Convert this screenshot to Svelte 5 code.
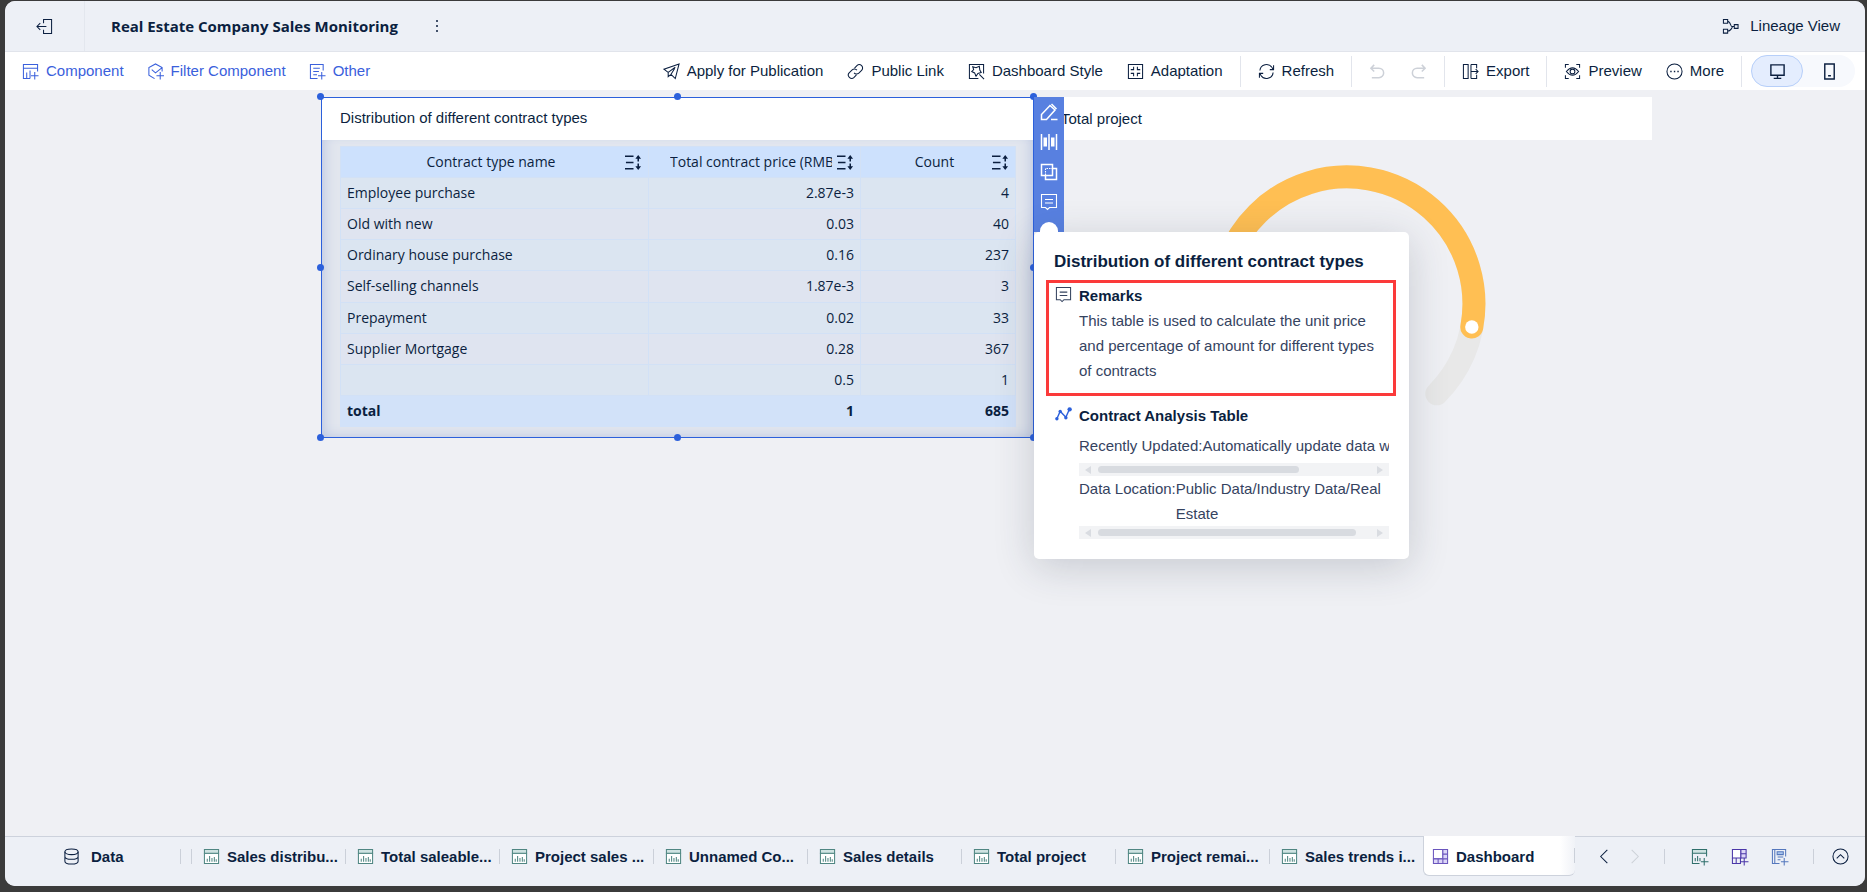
<script lang="ts">
  interface Row {
    name: string;
    price: string;
    count: string;
  }

  const columns = ["Contract type name", "Total contract price (RMB)", "Count"];

  const rows: Row[] = [
    { name: "Employee purchase", price: "2.87e-3", count: "4" },
    { name: "Old with new", price: "0.03", count: "40" },
    { name: "Ordinary house purchase", price: "0.16", count: "237" },
    { name: "Self-selling channels", price: "1.87e-3", count: "3" },
    { name: "Prepayment", price: "0.02", count: "33" },
    { name: "Supplier Mortgage", price: "0.28", count: "367" },
    { name: "", price: "0.5", count: "1" },
  ];

  const tabs = [
    "Sales distribu...",
    "Total saleable...",
    "Project sales ...",
    "Unnamed Co...",
    "Sales details",
    "Total project",
    "Project remai...",
    "Sales trends i...",
  ];

  const handles = ["nw", "n", "ne", "w", "e", "sw", "s", "se"];

  let device = $state("desktop");
</script>

{#snippet icon(name: string)}
  <svg class="icon" viewBox="0 0 18 18" aria-hidden="true">
    {#if name === "exit"}
      <path d="M8 5.500V1.500h8.500v15H8v-4M1 9h10M4.500 5.500L1 9l3.500 3.500" />
    {:else if name === "lineage"}
      <path d="M1.500 1.500h4.500v4H1.500zM1.500 12h4.500v4H1.500zM13 7h4v4h-4zM6 3.500c3 0 3 5.500 4.500 5.500S9 14 6 14M10 9h3" />
    {:else if name === "component"}
      <path d="M8.500 16.500h-7v-15h15V9M1.500 5.500h15M5 10v6.500M8.500 8v8.500M13.500 9.500v8M9.500 13.500h8" />
    {:else if name === "filter"}
      <path d="M16 9V4.800L9 1 2 4.800v8L8 16.500M5 7l4 3.500 7-5.700M14 9.500v8M10 13.500h8" />
    {:else if name === "other"}
      <path d="M9 16.500H1.500v-15h13.500V8M4.500 5.500h7M4.500 9h6M4.500 12.500h4M13.500 9.500v8M9.500 13.500h8" />
    {:else if name === "plane"}
      <path d="M17 1L1 6.500l4.500 3.500v4.500L8.500 12l4.500 4.500zM5.500 10L13 4.500M8.500 12l4-6.500" />
    {:else if name === "link"}
      <path d="M8 5.500l2.500-2.700a3.500 3.500 0 0 1 5 5l-3 3a3.500 3.500 0 0 1-5-.3M10 12.500l-2.500 2.700a3.500 3.500 0 0 1-5-5l3-3a3.500 3.500 0 0 1 5 .3" />
    {:else if name === "style"}
      <path d="M11 16.500H1.500v-15h15V11M5 4l3.500 1L12 3.500l.5 4L14 10l-3.500 1-2 3-1.500-3.500L4 9l2-2zM12 12l5 5" />
    {:else if name === "adapt"}
      <path d="M1.500 1.500h15v15h-15zM4 7h3V4M14 7h-3V4M4 11h3v3M14 11h-3v3" />
    {:else if name === "refresh"}
      <path d="M2 8a7 7 0 0 1 13-3l1 2M16.500 2.500v4.500h-4M16 10a7 7 0 0 1-13 3l-1-2M1.500 15.500v-4.500h4" />
    {:else if name === "undo"}
      <path d="M5.500 2L2 5.500 5.500 9M2 5.500h8.500a5 5 0 0 1 0 10H3" stroke-width="1.600" />
    {:else if name === "redo"}
      <path d="M12.500 2L16 5.500 12.500 9M16 5.500H7.500a5 5 0 0 0 0 10H15" stroke-width="1.600" />
    {:else if name === "export"}
      <path d="M6.500 1.500h-5v15h5zM9.500 1.500h6v4M9.500 16.500h6v-4M9.500 1.500v15M9.500 9h7.500M14.500 6.500L17 9l-2.500 2.500" />
    {:else if name === "preview"}
      <path d="M1.500 5V1.500H5M13 1.500h3.500V5M1.500 13v3.500H5M13 16.500h3.500V13M2.500 9Q9 1 15.500 9 9 17 2.500 9z" />
      <circle cx="9" cy="9" r="2.500" />
    {:else if name === "more"}
      <circle cx="9" cy="9" r="8" />
      <path class="solid" d="M4.500 8.300h1.500v1.500H4.500zM8.300 8.300h1.500v1.500H8.300zM12 8.300h1.500v1.500H12z" />
    {:else if name === "desktop"}
      <path d="M2 2h14v11H2zM9 13v3M5 16.300h8" stroke-width="1.500" />
    {:else if name === "phone"}
      <path d="M4 1h10v16H4zM7.500 13.500h3" stroke-width="1.500" />
    {:else if name === "sort"}
      <path d="M0 2.500h9M1 9h8M0 15.500h9M14 3v5M14 10v5" stroke-width="1.600" />
      <path class="solid" d="M11 5L14 1l3 4zM11 13l3 4 3-4z" />
    {:else if name === "edit"}
      <path d="M1.500 16.500v-5l8.500-9 5 4.500-8.500 9.500zM11.500 1l5 5M11 16.500h6.500" stroke-width="1.500" />
    {:else if name === "columns"}
      <path d="M1.500 1v16M9 1v16M16.500 1v16" stroke-width="1.500" />
      <path class="solid" d="M3.500 4.500h3.500v9H3.500zM11 4.500h3.500v9H11z" />
    {:else if name === "copy"}
      <path d="M1.500 1.500h11v11h-11zM12.500 5.500h4v11h-11v-4" stroke-width="1.500" />
      <path d="M5.500 12v-6.500H12" stroke-dasharray="1.500 1" />
    {:else if name === "remark"}
      <path d="M1.500 1.500h15v13H9.500l-2 2-2-2h-4zM5 6.500h8M5 10h8" />
    {:else if name === "trend"}
      <path d="M2 13.500L5.500 5.500l6 6.500 4-9" stroke-width="1.500" />
      <circle class="solid" cx="2" cy="13.500" r="1.800" />
      <circle class="solid" cx="5.500" cy="5.800" r="1.800" />
      <circle class="solid" cx="11.500" cy="12.500" r="1.800" />
      <circle class="solid" cx="15.500" cy="3.500" r="2.300" />
    {:else if name === "data"}
      <ellipse cx="9" cy="4" rx="7" ry="3" />
      <path d="M2 4v10c0 4 14 4 14 0V4M2 9c0 4 14 4 14 0" />
    {:else if name === "chart"}
      <path d="M1.500 5.500h15v11h-15z" fill="#fff" />
      <path d="M1.500 1.500h15v4h-15z" fill="#cfe3e2" />
      <path d="M4.500 11.500v3M7 8.500v6M9.500 10.500v4M12 9.500v5M14 12v2.500" />
    {:else if name === "chart-add"}
      <path d="M1.500 1.500h15v4h-15z" fill="#cfe3e2" />
      <path d="M16.500 5.500V9M9 16.500H1.500v-11M4.500 10.500V14M7 8.500V14M9.500 10.500V14M14 10.500v8M10.500 14.500h8" />
    {:else if name === "board"}
      <path d="M1.500 1.500h10v10h-10z" fill="#fff" />
      <path d="M11.500 1.500h5v15h-15v-5h10z" fill="#dcd6f7" />
      <path d="M11.500 6.500h5M6.500 11.500v5M11.500 11.500h5M11.500 11.500v5" />
    {:else if name === "board-add"}
      <path d="M1.500 1.500h9v9h-9z" fill="#fff" />
      <path d="M10.500 1.500h5.500v9h-5.500z" fill="#dcd6f7" />
      <path d="M10.500 6h5.500M1.500 10.500v6h8.500v-6M5.500 10.500v6M14 10.500v8M10.500 14.500h8" />
    {:else if name === "report-add"}
      <path d="M9 16.500H1.500v-15h14V9M4 1.500v15M7 9.500h6M7 12.500h3M14 10.500v8M10.500 14.500h8" />
      <path d="M6.500 4h6.500v3H6.500z" fill="#a9c5ee" />
    {:else if name === "prev"}
      <path d="M12 2L5 9l7 7" />
    {:else if name === "next"}
      <path d="M6 2l7 7-7 7" />
    {:else if name === "collapse"}
      <circle cx="9" cy="9" r="8" />
      <path d="M5 11l4-4 4 4" />
    {/if}
  </svg>
{/snippet}

{#snippet action(name: string, label: string)}
  <button class="action">{@render icon(name)}{label}</button>
{/snippet}

{#snippet scrollbar(size: number)}
  <div class="scrollbar">
    <svg viewBox="0 0 6 8" aria-hidden="true"><path d="M6 0v8L0 4z" /></svg>
    <div class="track"><div class="thumb" style:width={`${size}%`}></div></div>
    <svg viewBox="0 0 6 8" aria-hidden="true"><path d="M0 0v8l6-4z" /></svg>
  </div>
{/snippet}

<div class="frame">
  <header>
    <button class="exit" aria-label="Exit">{@render icon("exit")}</button>
    <h1>Real Estate Company Sales Monitoring</h1>
    <button class="kebab" aria-label="Dashboard menu"><i></i><i></i><i></i></button>
    <button class="action lineage">{@render icon("lineage")}Lineage View</button>
  </header>

  <div class="toolbar">
    <div class="group add">
      {@render action("component", "Component")}
      {@render action("filter", "Filter Component")}
      {@render action("other", "Other")}
    </div>
    <div class="group push">
      {@render action("plane", "Apply for Publication")}
      {@render action("link", "Public Link")}
      {@render action("style", "Dashboard Style")}
      {@render action("adapt", "Adaptation")}
    </div>
    <div class="group">{@render action("refresh", "Refresh")}</div>
    <div class="group">
      <button class="action" disabled aria-label="Undo">{@render icon("undo")}</button>
      <button class="action" disabled aria-label="Redo">{@render icon("redo")}</button>
    </div>
    <div class="group">{@render action("export", "Export")}</div>
    <div class="group">
      {@render action("preview", "Preview")}
      {@render action("more", "More")}
    </div>
    <div class="devices">
      {#each ["desktop", "phone"] as d (d)}
        <button class:active={device === d} aria-label={d} onclick={() => (device = d)}>
          {@render icon(d)}
        </button>
      {/each}
    </div>
  </div>

  <main>
    <section class="widget selected">
      <h2>Distribution of different contract types</h2>
      <div class="table-wrap">
        <table>
          <colgroup>
            <col class="c-name" />
            <col class="c-price" />
            <col class="c-count" />
          </colgroup>
          <thead>
            <tr>
              {#each columns as column (column)}
                <th><div><span>{column}</span>{@render icon("sort")}</div></th>
              {/each}
            </tr>
          </thead>
          <tbody>
            {#each rows as row (row.price)}
              <tr>
                <td>{row.name}</td>
                <td>{row.price}</td>
                <td>{row.count}</td>
              </tr>
            {/each}
          </tbody>
          <tfoot>
            <tr><td>total</td><td>1</td><td>685</td></tr>
          </tfoot>
        </table>
      </div>

      {#each handles as h (h)}
        <span class="handle {h}"></span>
      {/each}

      <div class="tools">
        <button aria-label="Edit">{@render icon("edit")}</button>
        <button aria-label="Columns">{@render icon("columns")}</button>
        <button aria-label="Copy">{@render icon("copy")}</button>
        <button aria-label="Remarks">{@render icon("remark")}</button>
      </div>

      <aside class="popover">
        <h3>Distribution of different contract types</h3>
        <div class="info marked">
          {@render icon("remark")}
          <div>
            <h4>Remarks</h4>
            <p>This table is used to calculate the unit price and percentage of amount for different types of contracts</p>
          </div>
        </div>
        <div class="info source">
          {@render icon("trend")}
          <div>
            <h4>Contract Analysis Table</h4>
            <p class="line">Recently Updated:Automatically update data when</p>
            {@render scrollbar(74)}
            <div class="location">
              <span>Data Location:</span>
              <span>Public Data/Industry Data/Real Estate</span>
            </div>
            {@render scrollbar(95)}
          </div>
        </div>
      </aside>
    </section>

    <section class="widget gauge">
      <h2>Total project</h2>
      <svg viewBox="0 0 278 242" aria-hidden="true">
        <path d="M49.200 228.800A127 127 0 1 1 228.800 228.800" stroke="#e8e8e8" />
        <path d="M49.200 228.800A127 127 0 1 1 263.800 162" stroke="#ffbf53" />
        <circle cx="263.800" cy="162" r="6.700" fill="#fff" />
      </svg>
    </section>
  </main>

  <footer>
    <button class="data">{@render icon("data")}Data</button>
    <nav>
      {#each tabs as tab (tab)}
        <button class="tab">{@render icon("chart")}{tab}</button>
      {/each}
      <button class="tab current">{@render icon("board")}Dashboard</button>
    </nav>
    <div class="pager">
      <button aria-label="Previous tabs">{@render icon("prev")}</button>
      <button aria-label="Next tabs" disabled>{@render icon("next")}</button>
    </div>
    <div class="create">
      <button class="green" aria-label="Add component">{@render icon("chart-add")}</button>
      <button class="purple" aria-label="Add dashboard">{@render icon("board-add")}</button>
      <button class="blue" aria-label="Add report">{@render icon("report-add")}</button>
    </div>
    <button class="collapse" aria-label="Collapse">{@render icon("collapse")}</button>
  </footer>
</div>

<style>
  :global(body) {
    background: #3b3b3b;
  }
  .frame {
    --ink: #0b1f40;
    --primary: #2c60db;
    --bar: #edf0f6;
    box-sizing: border-box;
    display: flex;
    flex-direction: column;
    height: calc(100vh - 7px);
    margin: 1px 2px 6px 5px;
    border-radius: 10px;
    overflow: hidden;
    background: #eff0f4;
    color: var(--ink);
    font: 15px/20px "Liberation Sans", Arial, sans-serif;
  }
  h1,
  h2,
  h3,
  h4,
  p {
    margin: 0;
  }
  button {
    display: flex;
    align-items: center;
    border: none;
    padding: 0;
    background: transparent;
    color: inherit;
    font: inherit;
    white-space: nowrap;
    cursor: pointer;
  }
  button:disabled {
    color: #cdd1d8;
  }
  .icon {
    flex: none;
    width: 17px;
    height: 17px;
    overflow: visible;
    fill: none;
    stroke: currentColor;
    stroke-width: 1.1;
  }
  .icon .solid {
    fill: currentColor;
    stroke: none;
  }

  header {
    display: flex;
    align-items: center;
    flex: none;
    height: 50px;
    background: var(--bar);
    border-bottom: 1px solid #e1e4eb;
  }
  .exit {
    box-sizing: border-box;
    justify-content: center;
    width: 80px;
    height: 100%;
    border-right: 1px solid #e3e7ee;
  }
  h1 {
    margin-left: 26px;
    font: 700 15px/20px "Open Sans", "Noto Sans", sans-serif;
  }
  .kebab {
    flex-direction: column;
    gap: 3px;
    margin-left: 38px;
  }
  .kebab i {
    width: 2px;
    height: 2px;
    background: #43526b;
  }
  .lineage {
    margin-left: auto;
    padding-right: 25px;
  }
  .lineage.action {
    gap: 11px;
  }

  .toolbar {
    display: flex;
    align-items: center;
    flex: none;
    height: 38px;
    padding: 0 10px 0 17px;
    background: #fff;
  }
  .group {
    display: flex;
    align-items: center;
    gap: 24px;
    height: 31px;
    padding: 0 17px;
    border-right: 1px solid #e2e5ec;
  }
  .group.add {
    gap: 23px;
    padding: 0;
    border: none;
    color: #3a60dc;
  }
  .group.push {
    margin-left: auto;
  }
  .action {
    gap: 7px;
  }
  .devices {
    display: flex;
    margin-left: 9px;
    border-radius: 16px;
    background: #f7f9fd;
  }
  .devices button {
    box-sizing: border-box;
    justify-content: center;
    width: 52px;
    height: 32px;
    border: 1px solid transparent;
    border-radius: 16px;
  }
  .devices .active {
    border-color: #b7cff9;
    background: #e4edfe;
  }

  main {
    display: flex;
    flex: 1;
    align-items: flex-start;
    padding: 7px 213px 0 316px;
  }
  .widget {
    position: relative;
    box-sizing: border-box;
    flex: 618 1 0;
    min-width: 0;
  }
  .widget h2 {
    padding: 12px 27px 11px;
    background: #fff;
    font-size: 15px;
    font-weight: 400;
    line-height: 20px;
  }
  .selected {
    z-index: 1;
    flex-grow: 713;
    outline: 1px solid var(--primary);
    outline-offset: -1px;
    background: #e2e6ee;
  }
  .selected h2 {
    margin: 1px 1px 0;
    padding: 10px 18px 12px;
  }
  .table-wrap {
    padding: 6px 19px 11px;
    box-shadow: inset 0 -10px 14px -10px #b8c3df, inset 12px 0 14px -10px #b8c3df,
      inset -12px 0 14px -10px #b8c3df;
  }
  table {
    width: 100%;
    height: 281px;
    table-layout: fixed;
    border-collapse: collapse;
    font: 14px/20px "Open Sans", "Noto Sans", sans-serif;
  }
  tr {
    height: 31px;
  }
  .c-name {
    width: 308px;
  }
  .c-price {
    width: 212px;
  }
  .c-count {
    width: 155px;
  }
  th,
  td {
    padding: 0 6px;
    border: 1px solid #d2e1f6;
    text-align: right;
    font-weight: 400;
  }
  th {
    background: #cde1fd;
  }
  th div {
    display: flex;
    align-items: center;
    gap: 5px;
    padding-left: 15px;
  }
  th span {
    flex: 1;
    overflow: hidden;
    text-align: center;
    white-space: nowrap;
  }
  td:first-child {
    text-align: left;
  }
  tbody tr:nth-child(odd) {
    background: #dbe5f1;
  }
  tbody tr:nth-child(even) {
    background: #dfe4f0;
  }
  tfoot td {
    border-color: #d2e2f9;
    background: #d2e2f9;
    font-weight: 700;
  }

  .handle {
    position: absolute;
    left: 0;
    top: 0;
    width: 7px;
    height: 7px;
    margin: -4px 0 0 -4px;
    border-radius: 50%;
    background: var(--primary);
  }
  .n,
  .s {
    left: 50%;
  }
  .ne,
  .e,
  .se {
    left: 100%;
  }
  .w,
  .e {
    top: 50%;
  }
  .sw,
  .s,
  .se {
    top: 100%;
  }
  .tools {
    position: absolute;
    left: 100%;
    top: 0;
    display: flex;
    flex-direction: column;
    gap: 12px;
    height: 129px;
    padding: 6px 6px 0;
    background: #5880e0;
    color: #fff;
  }
  .tools .icon {
    width: 18px;
    height: 18px;
  }
  .popover {
    position: absolute;
    left: 100%;
    top: 135px;
    box-sizing: border-box;
    width: 375px;
    padding: 18px 13px 20px 12px;
    border-radius: 5px;
    background: #fff;
    box-shadow: 0 8px 40px rgb(40 50 70 / 20%);
  }
  .popover::before {
    content: "";
    position: absolute;
    left: 6px;
    top: -10px;
    width: 18px;
    height: 12px;
    border-radius: 9px 9px 0 0;
    background: #fff;
  }
  h3 {
    margin: 0 0 6px 8px;
    font-size: 17px;
    line-height: 24px;
    white-space: nowrap;
  }
  h4 {
    font-size: 15px;
    line-height: 25px;
  }
  .info {
    display: flex;
    gap: 7px;
    line-height: 25px;
    color: #35435f;
  }
  .info > div {
    flex: 1;
    min-width: 0;
  }
  .info > .icon {
    margin-top: 3px;
  }
  .info h4 {
    color: var(--ink);
  }
  .marked {
    padding: 0 14px 10px 6px;
    border: 3px solid #fb3a3a;
  }
  .source {
    margin-top: 7px;
    padding: 0 7px 0 9px;
  }
  .source > .icon {
    color: var(--primary);
  }
  .line {
    margin: 5px 0;
    overflow: hidden;
    white-space: nowrap;
  }
  .location {
    display: flex;
  }
  .location span:first-child {
    flex: none;
  }
  .scrollbar {
    display: flex;
    align-items: center;
    gap: 7px;
    height: 13px;
    padding: 0 6px;
    background: #f2f3f5;
  }
  .scrollbar svg {
    width: 6px;
    height: 8px;
    fill: #d9dce1;
  }
  .track {
    flex: 1;
  }
  .thumb {
    height: 7px;
    border-radius: 4px;
    background: #d8dbe0;
  }

  .gauge svg {
    display: block;
    box-sizing: content-box;
    width: 278px;
    height: 242px;
    margin: 25px auto 0;
    padding-left: 7px;
    fill: none;
    stroke-width: 23px;
    stroke-linecap: round;
  }

  footer {
    display: flex;
    flex: none;
    box-sizing: border-box;
    height: 50px;
    padding-right: 16px;
    border-top: 1px solid #cdd2dc;
    background: var(--bar);
    font-weight: 700;
  }
  footer button {
    height: 39px;
  }
  .data {
    position: relative;
    gap: 11px;
    width: 186px;
    box-sizing: border-box;
    padding-left: 58px;
  }
  nav {
    display: flex;
  }
  .tab {
    position: relative;
    box-sizing: border-box;
    gap: 7px;
    width: 154px;
    padding-left: 12px;
  }
  .tab .icon {
    color: #4f8682;
  }
  /* short rule at the left of each tab */
  .tab::before,
  .data::after,
  .create::before,
  .collapse::before {
    content: "";
    position: absolute;
    left: 0;
    top: 12px;
    width: 1px;
    height: 15px;
    background: #cbd0d9;
  }
  .data::after {
    left: 175px;
  }
  .current {
    width: 152px;
    margin-top: -1px;
    border: 1px solid #cdd2dc;
    border-top: none;
    border-right: none;
    border-radius: 0 0 6px 6px;
    padding: 2px 0 0 8px;
    background: linear-gradient(to right, #fff 90%, #f0f2f7);
  }
  footer .current {
    height: 40px;
  }
  .current::before {
    left: auto;
    right: 0;
  }
  .current .icon {
    color: #6a55bd;
  }
  .pager {
    display: flex;
    gap: 13px;
    margin-left: auto;
    padding-right: 21px;
  }
  .create {
    position: relative;
    display: flex;
    gap: 23px;
    padding: 0 25px 0 27px;
  }
  .green {
    color: #2f6f6b;
  }
  .purple {
    color: #4a36a8;
  }
  .blue {
    color: #5578bd;
  }
  .collapse {
    position: relative;
    padding-left: 19px;
  }
</style>
